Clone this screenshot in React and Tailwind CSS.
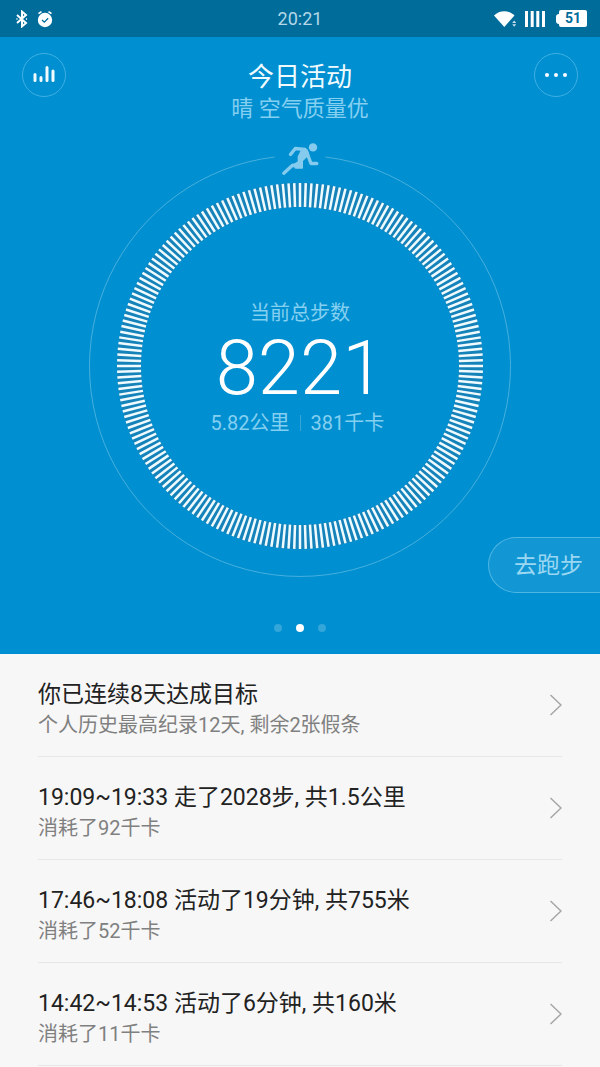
const activities = [
  { title: "你已连续8天达成目标", detail: "个人历史最高纪录12天, 剩余2张假条" },
  { title: "19:09~19:33 走了2028步, 共1.5公里", detail: "消耗了92千卡" },
  { title: "17:46~18:08 活动了19分钟, 共755米", detail: "消耗了52千卡" },
  { title: "14:42~14:53 活动了6分钟, 共160米", detail: "消耗了11千卡" },
];

const TICKS = 200;

function StatusBar() {
  return (
    <div className="grid h-[37px] grid-cols-[1fr_auto_1fr] items-center bg-[#006c9a] px-[13px] text-white">
      <div className="flex items-center gap-2">
        <svg width="16" height="18" viewBox="0 0 16 18" fill="none" stroke="currentColor" strokeWidth="2" aria-hidden="true">
          <path d="M4 5l9 8-4 3.400V1.600L13 5l-9 8" strokeLinejoin="miter" />
          <path d="M4 8.200v1.600M13.500 8.200v1.600" strokeWidth="1.200" />
        </svg>
        <svg width="16" height="18" viewBox="0 0 16 18" aria-hidden="true">
          <circle cx="8" cy="10" r="7.200" fill="#fff" />
          <path d="M5 10l2.300 2.200 3.900-4" fill="none" stroke="#006c9a" strokeWidth="1.300" />
          <path d="M1.500 3.600l3-2M14.500 3.600l-3-2" stroke="#fff" strokeWidth="1.700" />
        </svg>
      </div>
      <span className="text-[18px] leading-6 text-[#b4d8e9]">20:21</span>
      <div className="flex items-center justify-end gap-2">
        <svg width="24" height="18" viewBox="0 0 24 18" fill="currentColor" aria-hidden="true">
          <path d="M1 5.500C6.500-.2 16-.2 21.500 5.500L11.300 17z" />
          <path d="M19.200 13l2-2.400 2 2.400zM19.200 14.300l2 2.400 2-2.400z" opacity=".8" />
        </svg>
        <svg width="20" height="18" viewBox="0 0 20 18" fill="currentColor" aria-hidden="true">
          <path d="M0 1h3v16H0zM5.700 1h3v16h-3zM11.300 1h3v16h-3zM17 1h3v16h-3z" />
        </svg>
        <div className="flex items-center pl-[3px]">
          <span className="h-[10px] w-[3px] rounded-l-sm bg-white" />
          <span className="h-[17px] w-7 rounded-xs bg-white text-center text-[14px] leading-[17px] font-bold text-[#006c9a]">51</span>
        </div>
      </div>
    </div>
  );
}

function StepRing() {
  return (
    <svg width="424" height="436" viewBox="0 0 424 436" fill="none" aria-hidden="true">
      <path d="M186.500 15A210.500 210.500 0 1 0 237.500 15" stroke="#47b0df" />
      <circle cx="212" cy="224" r="171" stroke="#1583ba" strokeWidth="24" />
      <g stroke="#effbff" strokeWidth="2.500">
        {Array.from({ length: TICKS }, (_, i) => (
          <path key={i} d="M212 41v24" transform={`rotate(${(i * 360) / TICKS} 212 224)`} />
        ))}
      </g>
      {/* runner */}
      <g stroke="#85cbed" strokeLinecap="round" strokeLinejoin="round">
        <circle cx="225" cy="5.400" r="4.200" fill="#85cbed" stroke="none" />
        <path d="M202.500 12.500L207.300 6.500L217 7.500" strokeWidth="3.400" />
        <path d="M218.500 9.500L223 21.500H228.800" strokeWidth="3.400" />
        <path d="M214 7.500L219 8L220.500 12.500L214.200 18.800V26H207.500L206 22.500L210.500 20V14.500Z" fill="#85cbed" strokeWidth="1.600" />
        <path d="M195.800 31.200L204.500 23.200L210 24.500" strokeWidth="3.400" />
      </g>
    </svg>
  );
}

function ActivityRow({ title, detail }) {
  return (
    <li>
      <a href="#" className="flex min-h-[103px] items-center justify-between border-b border-[#e6e6e6]">
        <div className="pt-6 pb-4">
          <h2 className="text-[23px] leading-8 text-[#222]">{title}</h2>
          <p className="text-[20px] leading-7 text-[#808080]">{detail}</p>
        </div>
        <svg width="12" height="22" viewBox="0 0 12 22" fill="none" stroke="#a6a6a6" strokeWidth="1.500" aria-hidden="true">
          <path d="M.5 1l10.500 10L.5 21" />
        </svg>
      </a>
    </li>
  );
}

export default function App() {
  return (
    <div className="min-h-screen bg-[#f7f7f7] font-['Roboto','Noto_Sans_CJK_SC',sans-serif]">
      <div className="bg-[#008fd0]">
        <StatusBar />
        <header className="flex items-start justify-between px-[22px] pt-4">
          <button aria-label="统计" className="flex size-11 items-center justify-center rounded-full border border-[#3fb0e3]">
            <svg width="22" height="18" viewBox="0 0 22 18" stroke="#effbff" strokeWidth="3" strokeLinecap="round" aria-hidden="true">
              <path d="M2 8.500v6M8 11.500v3M14 1.500v13M20 5v9.500" />
            </svg>
          </button>
          <div className="text-center">
            <h1 className="text-[26px] leading-12 text-[#effbff]">今日活动</h1>
            <p className="text-[22px] leading-4 text-[#85cff1]">晴 空气质量优</p>
          </div>
          <button aria-label="更多" className="flex size-11 items-center justify-center gap-[5px] rounded-full border border-[#3fb0e3]">
            <span className="size-1 rounded-full bg-white" />
            <span className="size-1 rounded-full bg-white" />
            <span className="size-1 rounded-full bg-white" />
          </button>
        </header>

        <section className="relative mt-[25px] flex justify-center">
          <StepRing />
          <div className="absolute inset-x-0 top-4 bottom-0 flex flex-col items-center justify-center text-[20px] leading-7 text-[#85cff1]">
            <p>当前总步数</p>
            <p className="text-[76px] leading-[82px] font-light text-white">8221</p>
            <div className="grid grid-cols-[1fr_auto_1fr] items-center gap-[10px]">
              <span className="text-right">5.82公里</span>
              <span className="h-4 w-px bg-[#35a5da]" />
              <span>381千卡</span>
            </div>
          </div>
          <button className="absolute right-0 -bottom-[15px] h-14 rounded-l-full border border-r-0 border-[#4db6e4] bg-[#1297d4] pt-[2px] pr-[17px] pl-[25px] text-[23px] text-[#9bd7f2]">
            去跑步
          </button>
        </section>

        <div className="mt-[46px] flex justify-center gap-[14px] pb-[22px]">
          <span className="size-2 rounded-full bg-[#33a6da]" />
          <span className="size-2 rounded-full bg-white" />
          <span className="size-2 rounded-full bg-[#33a6da]" />
        </div>
      </div>

      <ul className="px-[38px]">
        {activities.map((item) => (
          <ActivityRow key={item.title} title={item.title} detail={item.detail} />
        ))}
      </ul>
    </div>
  );
}
